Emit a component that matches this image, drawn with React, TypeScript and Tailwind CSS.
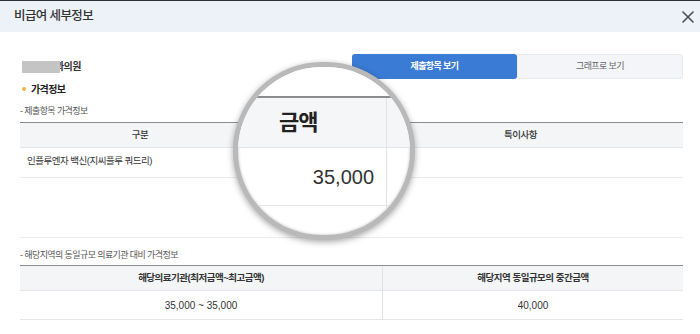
import React from "react";

const font = { fontFamily: '"Liberation Sans", "Noto Sans CJK KR", sans-serif' };

function CloseIcon() {
	return (
		<svg width="12" height="12" viewBox="0 0 12 12" fill="none">
			<path d="M1 1L11 11M11 1L1 11" stroke="#4a4d52" strokeWidth="1.6" strokeLinecap="round" />
		</svg>
	);
}

function Magnifier() {
	return (
		<div className="absolute left-[233px] top-[62px] h-[178px] w-[182px] overflow-hidden rounded-full border-[5px] border-[#b9b9b9] bg-white shadow-[0_2px_6px_rgba(0,0,0,0.35),inset_0_0_3px_rgba(0,0,0,0.25)]">
			<div className="flex h-full w-full flex-col">
				<div className="h-[29px] shrink-0 bg-white" />
				<div className="h-[2px] shrink-0 bg-[#8c8c8c]" />
				<div className="flex h-[50px] shrink-0 border-b border-[#e2e4e8] bg-[#f5f6f8]">
					<div className="flex w-[149px] items-center border-r border-[#dfe1e4] pl-[41px] text-[22px] font-bold leading-none tracking-[-1px] text-[#222]">
						금액
					</div>
					<div className="flex-1" />
				</div>
				<div className="flex h-[58px] shrink-0 border-b border-[#e6e6e6]">
					<div className="flex w-[149px] items-center justify-end border-r border-[#dfe1e4] pr-[12px] text-[20px] leading-none text-[#333]">
						35,000
					</div>
					<div className="flex-1" />
				</div>
				<div className="flex flex-1">
					<div className="w-[149px] border-r border-[#dfe1e4]" />
					<div className="flex-1" />
				</div>
			</div>
		</div>
	);
}

export default function App() {
	return (
		<div className="relative h-[334px] w-[700px] overflow-hidden bg-white text-[#333]" style={font}>
			<div className="flex h-[32px] items-center justify-between border-t border-[#2c3036] bg-[#edf2f9] pl-[14px] pr-[6px]">
				<span className="text-[12.5px] font-medium tracking-[-0.6px] text-[#333]">비급여 세부정보</span>
				<CloseIcon />
			</div>

			<div className="pl-[20px] pr-[17px] pt-[22px]">
				<div className="flex h-[25px] items-center">
					<div className="flex flex-1 items-center pl-[2px]">
						<span className="relative z-10 h-[12px] w-[38px] bg-[#c4c4c4]" />
						<span className="-ml-[5px] text-[10px] font-bold tracking-[-0.6px] text-[#333]">과의원</span>
					</div>
					<div className="flex h-[25px] w-[331px]">
						<div className="flex w-[165px] items-center justify-center rounded-[3px] bg-[#3a7bd5] text-[9px] font-bold tracking-[-0.6px] text-white">
							제출항목 보기
						</div>
						<div className="flex flex-1 items-center justify-center rounded-r-[3px] border border-[#e6e9ee] bg-[#f3f5f8] text-[9px] tracking-[-0.6px] text-[#666]">
							그래프로 보기
						</div>
					</div>
				</div>

				<div className="mt-[1px] flex h-[18px] items-center gap-[5px] pl-[2px]">
					<span className="h-[4px] w-[4px] rounded-full bg-[#f0b64a]" />
					<span className="text-[10px] font-bold tracking-[-0.6px] text-[#222]">가격정보</span>
				</div>

				<div className="flex h-[24px] items-center pt-[3px] text-[9px] tracking-[-0.6px] text-[#555]">- 제출항목 가격정보</div>

				<div className="border-t border-[#8c8c8c]">
					<div className="flex h-[25px] border-b border-[#e4e6ea] bg-[#f4f5f7] text-[9.5px] font-medium tracking-[-0.5px] text-[#333]">
						<div className="flex w-[240px] items-center justify-center">구분</div>
						<div className="w-[97px] border-l border-[#e0e2e5]" />
						<div className="flex flex-1 items-center justify-center border-l border-[#e0e2e5]">특이사항</div>
					</div>
					<div className="flex h-[30px] border-b border-[#ececec] text-[9.5px] tracking-[-0.5px] text-[#333]">
						<div className="w-[240px] pl-[7px] pt-[6px]">인플루엔자 백신(지씨플루 쿼드리)</div>
						<div className="w-[97px]" />
						<div className="flex-1" />
					</div>
					<div className="h-[60px] border-b border-[#ececec]" />
				</div>

				<div className="flex h-[27px] items-end pb-[3px] text-[9px] tracking-[-0.6px] text-[#555]">
					- 해당지역의 동일규모 의료기관 대비 가격정보
				</div>

				<div className="border-t border-[#8c8c8c] text-[#333]">
					<div className="flex h-[25px] border-b border-[#e4e6ea] bg-[#f4f5f7] text-[9.5px] font-semibold tracking-[-0.5px]">
						<div className="flex w-[362px] items-center justify-center">해당의료기관(최저금액~최고금액)</div>
						<div className="flex flex-1 items-center justify-center border-l border-[#e0e2e5]">
							해당지역 동일규모의 중간금액
						</div>
					</div>
					<div className="flex h-[29px] border-b border-[#e6e6e6] text-[10px]">
						<div className="flex w-[362px] items-center justify-center">35,000 ~ 35,000</div>
						<div className="flex flex-1 items-center justify-center border-l border-[#e0e2e5]">40,000</div>
					</div>
				</div>
			</div>

			<Magnifier />
		</div>
	);
}
